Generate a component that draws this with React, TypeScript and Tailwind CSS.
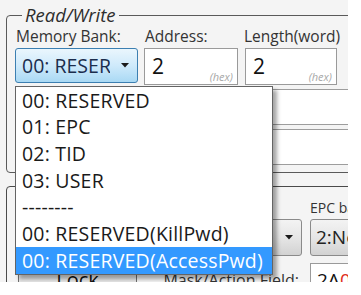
import React from 'react';

const bankOptions = [
  '00: RESERVED',
  '01: EPC',
  '02: TID',
  '03: USER',
  '--------',
  '00: RESERVED(KillPwd)',
  '00: RESERVED(AccessPwd)',
];

function Arrow() {
  return (
    <svg width="8" height="5" viewBox="0 0 8 5" className="shrink-0">
      <path d="M0 0 L8 0 L4 4.5 Z" fill="#1a1a1a" />
    </svg>
  );
}

function HexBox({ value }: { value: string }) {
  return (
    <div className="relative h-[37px] bg-white border border-[#9a9a9a] flex items-center pl-[7px]">
      <span className="text-[21px] text-[#111] leading-none">{value}</span>
      <span className="absolute right-[4px] bottom-[2px] text-[11px] italic text-[#a8a8a8] leading-none">
        (hex)
      </span>
    </div>
  );
}

export default function App() {
  const selected = 6;

  return (
    <div className="w-[361px] h-[295px] bg-white">
      <div className="w-[348px] h-[282px] bg-[#f4f4f4] overflow-hidden font-['Open_Sans',sans-serif] text-[#222]">
        <div className="pl-[6px] pt-[4px] w-[420px]">
          {/* Read/Write group */}
          <fieldset className="border border-[#5a5a5a] rounded-[4px] pl-[8px] pr-0 pb-[7px]">
            <legend className="ml-[7px] px-[3px] text-[18.5px] italic leading-[22px] text-[#2d2d2d]">
              Read/Write
            </legend>

            <div className="grid grid-cols-[123px_94px_93px] gap-x-[6px] mt-[1px]">
              <div className="text-[15.5px] leading-[18px] text-[#333] pl-[1px]">Memory Bank:</div>
              <div className="text-[15.5px] leading-[18px] text-[#333] pl-[1px]">Address:</div>
              <div className="text-[15.5px] leading-[18px] text-[#333] whitespace-nowrap">
                Length(word)
              </div>

              {/* combo + open list */}
              <div className="relative mt-[3px]">
                <div className="h-[35px] rounded-[3px] border border-[#3c7fb1] bg-gradient-to-b from-[#eaf6fd] via-[#cfeafb] to-[#a9d9f4] flex items-center pl-[6px] pr-[8px] gap-[11px]">
                  <span className="flex-1 overflow-hidden whitespace-nowrap text-[19.5px] leading-none text-[#1b2d4d]">
                    00: RESERVED
                  </span>
                  <Arrow />
                </div>

                <div className="absolute left-0 top-[38px] z-10 w-[258px] bg-white border border-[#646464] shadow-[4px_4px_4px_rgba(0,0,0,0.35)]">
                  {bankOptions.map((opt, i) => (
                    <div
                      key={opt + i}
                      className={
                        i === selected
                          ? 'h-[26.7px] flex items-center pl-[6px] text-[19.5px] tracking-[0.2px] whitespace-nowrap bg-[#3399ff] text-white'
                          : 'h-[26.7px] flex items-center pl-[6px] text-[19.5px] tracking-[0.2px] whitespace-nowrap text-[#1a1a1a]'
                      }
                    >
                      {opt}
                    </div>
                  ))}
                </div>
              </div>
              <div className="mt-[3px]">
                <HexBox value="2" />
              </div>
              <div className="mt-[3px] ml-[1px]">
                <HexBox value="2" />
              </div>
            </div>

            <div className="mt-[4px] h-[36px] bg-white border border-[#9d9d9d]" />
            <div className="mt-[4px] h-[36px] bg-white border border-[#9d9d9d]" />
          </fieldset>

          {/* Lock group */}
          <fieldset className="mt-[13px] border border-[#4a4a4a] rounded-[4px] pl-[11px] pt-[12px] pb-[8px]">
            <div className="grid grid-cols-[119px_13px_152px_8px_120px] items-end">
              <div />
              <div />
              <div />
              <div />
              <div className="text-[14px] leading-[18px] text-[#333] whitespace-nowrap">EPC bank:</div>

              <div className="col-span-2" />
              <div className="mt-[2px] h-[37px] rounded-[3px] border border-[#8a8a8a] bg-gradient-to-b from-[#f3f3f3] via-[#e6e6e6] to-[#d2d2d2] flex items-center justify-end pr-[8px]">
                <Arrow />
              </div>
              <div />
              <div className="mt-[2px] h-[37px] rounded-[3px] border border-[#8a8a8a] bg-gradient-to-b from-[#f3f3f3] via-[#e6e6e6] to-[#d2d2d2] flex items-center pl-[5px] text-[19px] text-[#222] whitespace-nowrap">
                2:NoAction
              </div>

              <div className="mt-[7px] h-[34px] rounded-[3px] border border-[#707070] bg-gradient-to-b from-[#f3f3f3] to-[#dcdcdc] flex items-center justify-center text-[20px] text-[#111]">
                Lock
              </div>
              <div />
              <div className="mt-[7px] h-[34px] flex items-center justify-end pr-[3px] text-[16px] text-[#333] whitespace-nowrap">
                Mask/Action Field:
              </div>
              <div />
              <div className="mt-[7px] h-[34px] bg-white border border-[#9a9a9a] flex items-center pl-[6px] text-[19px] text-[#111]">
                2A<span className="text-[#e0301e]">0</span>
              </div>
            </div>
          </fieldset>
        </div>
      </div>
    </div>
  );
}
